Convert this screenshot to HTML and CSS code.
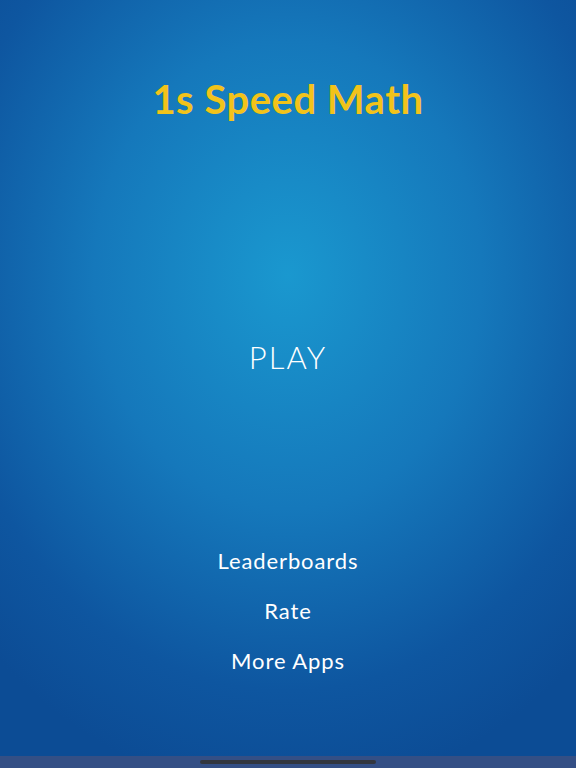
FILE: index.html
```html
<!DOCTYPE html>
<html lang="en">
<head>
  <meta charset="UTF-8">
  <title>1s Speed Math</title>
  <meta name="viewport" content="width=device-width, initial-scale=1" />
  <link rel="stylesheet" href="styles.css">
</head>
<body>
  <div class="screen">
    <h1 class="title">1s Speed Math</h1>
    <div class="play">PLAY</div>
    <div class="menu">
      <div class="menu-item">Leaderboards</div>
      <div class="menu-item">Rate</div>
      <div class="menu-item">More Apps</div>
    </div>
  </div>
  <div class="home-bar"><span class="home-indicator"></span></div>
</body>
</html>
```

FILE: styles.css
```css
html, body { margin: 0; padding: 0; }
body { width: 576px; height: 768px; overflow: hidden; font-family: Lato, "Open Sans", sans-serif; color: #fff; background: #344f85; }
.screen { height: 756px; display: flex; flex-direction: column; align-items: center; background: radial-gradient(ellipse 430px 520px at 288px 275px, #1a98cf 0%, #1578bb 45%, #0e56a0 80%, #0c4c95 100%); }
.title { margin: 76px 0 0; font-size: 40px; font-weight: 700; color: #f2c31a; line-height: 46px; letter-spacing: 0.5px; }
.play { margin-top: 215px; font-size: 31px; font-weight: 300; line-height: 40px; letter-spacing: 2px; }
.menu { margin-top: 169px; display: flex; flex-direction: column; align-items: center; gap: 20px; }
.menu-item { font-size: 22px; line-height: 30px; letter-spacing: 0.9px; }
.home-bar { height: 12px; display: flex; justify-content: center; align-items: flex-start; }
.home-indicator { margin-top: 4px; width: 176px; height: 4px; border-radius: 2px; background: #33373f; }
```
